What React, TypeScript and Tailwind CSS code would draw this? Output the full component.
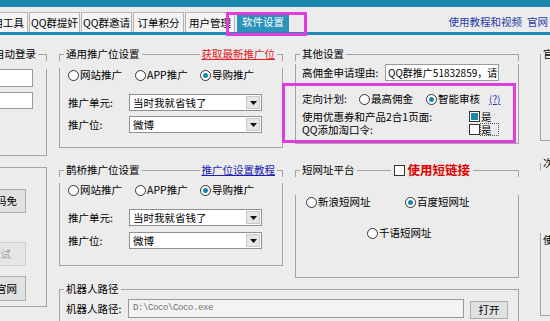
import React from 'react';

const Radio: React.FC<{ checked?: boolean; label: string; className?: string }> = ({ checked, label, className = '' }) => (
  <span className={`flex items-center whitespace-nowrap ${className}`}>
    <span className="w-[11px] h-[11px] shrink-0 rounded-full border border-[#333] bg-white flex items-center justify-center">
      {checked && <span className="w-[5px] h-[5px] rounded-full bg-[#1a86b0]" />}
    </span>
    <span className="ml-[1px]">{label}</span>
  </span>
);

const Check: React.FC<{ checked?: boolean }> = ({ checked }) => (
  <span className="w-[11px] h-[11px] shrink-0 border border-[#333] bg-white flex items-center justify-center">
    {checked && <span className="w-[7px] h-[7px] bg-[#1a86b0]" />}
  </span>
);

const Select: React.FC<{ value: string }> = ({ value }) => (
  <div className="w-[133px] h-[17px] border border-[#8f8f8f] bg-white flex items-center">
    <span className="flex-1 pl-[3px] whitespace-nowrap overflow-hidden">{value}</span>
    <div className="w-[14px] h-[13px] mr-[1px] bg-[#e6e6e6] border border-[#c9c9c9] flex items-center justify-center">
      <svg width="7" height="4" viewBox="0 0 7 4">
        <path d="M0 0h7L3.5 4z" fill="#111" />
      </svg>
    </div>
  </div>
);

interface GroupProps {
  title: string;
  right?: React.ReactNode;
  mid?: React.ReactNode;
  bodyClass?: string;
  className?: string;
  children?: React.ReactNode;
}

const Group: React.FC<GroupProps> = ({ title, right, mid, bodyClass = '', className = '', children }) => (
  <div className={className}>
    <div className="flex items-center h-[14px]">
      <div className="w-[5px] h-[7px] self-end border-t border-l border-[#a3a3a3]" />
      <span className="px-[2px] whitespace-nowrap">{title}</span>
      {mid && (
        <>
          <div className="w-[34px] h-[7px] self-end border-t border-[#a3a3a3]" />
          {mid}
        </>
      )}
      <div className="flex-1 h-[7px] self-end border-t border-[#a3a3a3]" />
      {right}
      <div className="w-[6px] h-[7px] self-end border-t border-r border-[#a3a3a3]" />
    </div>
    <div className={`border-l border-r border-b border-[#a3a3a3] ${bodyClass}`}>{children}</div>
  </div>
);

const PromoBody: React.FC<{ top: string; gap: string }> = ({ top, gap }) => (
  <>
    <div className={`flex items-center h-[14px] ${top}`}>
      <Radio label="网站推广" className="w-[67px]" />
      <Radio label="APP推广" className="w-[65px]" />
      <Radio label="导购推广" checked />
    </div>
    <div className="flex items-center mt-[12px]">
      <span className="w-[61px]">推广单元:</span>
      <Select value="当时我就省钱了" />
    </div>
    <div className={`flex items-center ${gap}`}>
      <span className="w-[61px]">推广位:</span>
      <Select value="微博" />
    </div>
  </>
);

const tabs = ['QQ群提奸', 'QQ群邀请', '订单积分', '用户管理'];

export default function App() {
  return (
    <div className="w-[550px] h-[321px] overflow-hidden relative bg-[#ececec] text-black text-[10.5px] leading-[14px] font-['Noto_Sans_CJK_SC',sans-serif]">
      <div className="h-[7px] bg-[#1b88ad]" />

      <div className="h-[25px] flex items-end">
        <div className="-ml-[22px] w-[50px] h-[20px] border border-b-0 border-[#b4b4b4] bg-[#f4f4f4] flex items-center justify-center whitespace-nowrap">
          实用工具
        </div>
        {tabs.map((t, i) => (
          <div
            key={t}
            className={`ml-[1px] h-[20px] border border-b-0 border-[#b4b4b4] bg-[#f4f4f4] flex items-center justify-center whitespace-nowrap ${i === 3 ? 'w-[50px]' : 'w-[51px]'}`}
          >
            {t}
          </div>
        ))}
        <div className="ml-[2px] w-[52px] h-[20px] bg-[#2b93bb] text-white flex items-center justify-center whitespace-nowrap">
          软件设置
        </div>
        <div className="flex-1" />
        <div className="h-[20px] flex items-center pr-[2px] text-[#2a3aa8] whitespace-nowrap">
          <span>使用教程和视频</span>
          <span className="ml-[5px]">官网</span>
        </div>
      </div>
      <div className="h-[3px] bg-[#1f8cb3]" />

      <div className="flex items-start pt-[12px]">
        {/* left column, cut off by the window edge */}
        <div className="-ml-[30px] w-[77px] shrink-0">
          <div className="flex items-center justify-end h-[14px]">
            <span className="pr-[2px] whitespace-nowrap">自动登录</span>
            <div className="w-[9px] h-[7px] self-end border-t border-r border-[#a3a3a3]" />
          </div>
          <div className="h-[87px] border-r border-b border-[#a3a3a3] pr-[13px]">
            <div className="mt-[8px] h-[18px] border border-[#9a9a9a] bg-white" />
            <div className="mt-[5px] h-[17px] border border-[#9a9a9a] bg-white" />
          </div>
          <div className="mt-[4px] flex h-[14px]">
            <div className="flex-1 h-[7px] self-end border-t border-r border-[#a3a3a3]" />
          </div>
          <div className="h-[133px] border-r border-b border-[#a3a3a3] pr-[20px] flex flex-col">
            <div className="mt-[15px] h-[24px] border border-[#adadad] bg-[#e1e1e1] flex items-center justify-end pr-[8px] whitespace-nowrap">
              验证码免
            </div>
            <div className="mt-[29px] h-[24px] border border-[#cfcfcf] bg-[#e6e6e6] text-[#a0a0a0] flex items-center justify-end pr-[14px] whitespace-nowrap">
              测试
            </div>
            <div className="mt-[10px] h-[25px] border border-[#adadad] bg-[#e1e1e1] flex items-center justify-end pr-[8px] whitespace-nowrap">
              进入官网
            </div>
          </div>
        </div>

        {/* middle block */}
        <div className="ml-[12px] w-[460px] shrink-0">
          <div className="flex gap-[12px]">
            <Group
              title="通用推广位设置"
              className="w-[224px]"
              bodyClass="h-[80px] pl-[8px]"
              right={<span className="px-[2px] text-[#e02020] underline whitespace-nowrap">获取最新推广位</span>}
            >
              <PromoBody top="mt-[7px]" gap="mt-[5px]" />
            </Group>
            <Group title="其他设置" className="w-[224px]" bodyClass="h-[80px] pl-[6px]">
              <div className="flex items-center mt-[3px]">
                <span className="w-[83px] whitespace-nowrap">高佣金申请理由:</span>
                <div className="w-[114px] h-[17px] border border-[#9a9a9a] bg-white pl-[2px] text-[10px] leading-[15px] whitespace-nowrap overflow-hidden">
                  QQ群推广51832859，请设置
                </div>
              </div>
              <div className="flex items-center h-[14px] mt-[11px]">
                <span className="w-[57px]">定向计划:</span>
                <Radio label="最高佣金" className="w-[67px]" />
                <Radio label="智能审核" checked className="w-[63px]" />
                <span className="text-[#2a3ac0] underline text-[10px]">(?)</span>
              </div>
              <div className="flex items-center h-[13px] leading-[13px] mt-[4px]">
                <span className="w-[167px] whitespace-nowrap">使用优惠券和产品2合1页面:</span>
                <Check checked />
                <span className="ml-[1px]">是</span>
              </div>
              <div className="flex items-center h-[13px] leading-[13px]">
                <span className="w-[167px] whitespace-nowrap">QQ添加淘口令:</span>
                <Check />
                <span className="border border-dotted border-[#555] leading-[11px] pr-[6px]">是</span>
              </div>
            </Group>
          </div>

          <div className="flex gap-[12px] mt-[15px]">
            <Group
              title="鹊桥推广位设置"
              className="w-[224px]"
              bodyClass="h-[83px] pl-[8px]"
              right={<span className="px-[2px] text-[#2020b0] underline whitespace-nowrap">推广位设置教程</span>}
            >
              <PromoBody top="mt-[6px]" gap="mt-[6px]" />
            </Group>
            <Group
              title="短网址平台"
              className="w-[224px]"
              bodyClass="h-[83px] pl-[10px]"
              mid={
                <span className="flex items-center px-[3px]">
                  <Check />
                  <span className="ml-[3px] text-[12.5px] font-bold text-[#e00000] whitespace-nowrap">使用短链接</span>
                </span>
              }
            >
              <div className="flex items-center h-[14px] mt-[18px]">
                <Radio label="新浪短网址" className="w-[99px]" />
                <Radio label="百度短网址" checked />
              </div>
              <div className="flex items-center h-[14px] mt-[17px] pl-[61px]">
                <Radio label="千语短网址" />
              </div>
            </Group>
          </div>

          <Group title="机器人路径" className="mt-[4px]" bodyClass="h-[28px] pl-[6px] flex items-start">
            <span className="w-[62px] mt-[6px] whitespace-nowrap">机器人路径:</span>
            <div className="mt-[3px] w-[336px] h-[19px] border border-[#9a9a9a] bg-[#f3f3f3] pl-[4px] text-[#707070] text-[9px] leading-[17px] tracking-[-0.4px] font-['Liberation_Mono',monospace] whitespace-nowrap">
              D:\Coco\Coco.exe
            </div>
            <div className="mt-[5px] ml-[6px] w-[38px] h-[18px] border border-[#adadad] bg-[#e1e1e1] flex items-center justify-center">
              打开
            </div>
          </Group>
        </div>

        {/* far right column, cut off */}
        <div className="ml-[21px] w-[60px] shrink-0">
          <div className="flex items-center h-[14px]">
            <div className="w-[1px] h-[7px] self-end border-t border-l border-[#a3a3a3]" />
            <span className="px-[2px] whitespace-nowrap">官方设置</span>
          </div>
          <div className="h-[80px] border-l border-b border-[#a3a3a3]" />
          <div className="flex items-center h-[14px] mt-[15px]">
            <div className="w-[1px] h-[7px] self-end border-t border-l border-[#a3a3a3]" />
            <span className="px-[2px] whitespace-nowrap">次数设置</span>
          </div>
          <div className="h-[83px] border-l border-b border-[#a3a3a3] pl-[2px]">
            <div className="mt-[63px] whitespace-nowrap">使用次数</div>
          </div>
        </div>
      </div>

      {/* magenta annotation boxes */}
      <div className="absolute left-[226px] top-[12px] w-[81px] h-[24px] border-[3px] border-[#e03ce0]" />
      <div className="absolute left-[282px] top-[83px] w-[234px] h-[60px] border-[3px] border-[#e03ce0]" />
    </div>
  );
}
